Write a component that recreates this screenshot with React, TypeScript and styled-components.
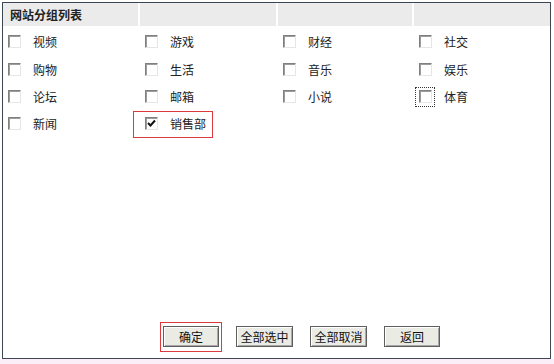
import React from "react";
import styled, { createGlobalStyle } from "styled-components";

const Global = createGlobalStyle`
  html, body { margin: 0; padding: 0; background: #fff; }
  body { font-family: "Noto Sans CJK SC", "Noto Sans", sans-serif; font-size: 12px; color: #1a1a1a; }
`;

const Page = styled.div`
  width: 554px;
  height: 364px;
  box-sizing: border-box;
  padding: 2px 0 0 2px;
  background: linear-gradient(to bottom, #fff 0, #fff 359px, #fbeef8 359px);
`;

const Frame = styled.div`
  width: 549px;
  height: 357px;
  box-sizing: border-box;
  border: 1px solid #3d4653;
  display: flex;
  flex-direction: column;
  background: #fff;
`;

const COLS = "135px 136px 134px 136px";

const Header = styled.div`
  display: grid;
  grid-template-columns: ${COLS};
  column-gap: 2px;
  height: 23px;
`;

const HeaderCell = styled.div`
  background: #ebebeb;
  display: flex;
  align-items: center;
  padding-left: 7px;
  font-weight: bold;
  font-size: 12px;
  color: #222;
`;

const Body = styled.div`
  display: grid;
  grid-template-columns: ${COLS};
  column-gap: 2px;
  grid-auto-rows: 27.4px;
  padding-top: 2px;
`;

const Cell = styled.label<{ $highlight?: boolean }>`
  position: relative;
  display: flex;
  align-items: center;
  gap: 12px;
  padding-left: 5px;
  font-size: 12px;
  color: #222;
  ${(p) =>
    p.$highlight &&
    `
    &::after {
      content: "";
      position: absolute;
      left: -7px;
      top: 1px;
      width: 80px;
      height: 27px;
      box-sizing: border-box;
      border: 1px solid #dc3a3f;
    }
  `}
`;

const Box = styled.span<{ $focus?: boolean }>`
  position: relative;
  width: 13px;
  height: 13px;
  box-sizing: border-box;
  border-style: solid;
  border-width: 1px;
  border-color: #808080 #e6e6e6 #e6e6e6 #808080;
  box-shadow: inset 1px 1px 0 #9c9c9c;
  background: #fff;
  display: flex;
  align-items: center;
  justify-content: center;
  ${(p) =>
    p.$focus &&
    `
    &::before {
      content: "";
      position: absolute;
      left: -5px;
      top: -4px;
      width: 20px;
      height: 20px;
      box-sizing: border-box;
      border: 1px dotted #333;
    }
  `}
`;

const Bar = styled.div`
  margin-top: auto;
  display: flex;
  align-items: center;
  padding: 0 0 11px 160px;
  gap: 17px;
`;

const Button = styled.button<{ $w: number; $highlight?: boolean }>`
  position: relative;
  width: ${(p) => p.$w}px;
  height: 21px;
  box-sizing: border-box;
  padding: 0;
  border: 1px solid #5e5e5e;
  background: #ebebe6;
  box-shadow: inset 1px 1px 0 #fff, inset -1px -1px 0 #a8a8a8;
  font-family: "Noto Sans CJK SC", sans-serif;
  font-size: 12px;
  color: #111;
  ${(p) =>
    p.$highlight &&
    `
    &::after {
      content: "";
      position: absolute;
      left: -4px;
      top: -5px;
      width: 62px;
      height: 30px;
      box-sizing: border-box;
      border: 1px solid #dc3a3f;
    }
  `}
`;

const Check = () => (
  <svg width="9" height="9" viewBox="0 0 9 9">
    <path d="M1 4 L3.5 6.5 L8 1.5" stroke="#111" strokeWidth="2" fill="none" />
  </svg>
);

const items: { label: string; checked?: boolean; focus?: boolean; highlight?: boolean }[] = [
  { label: "视频" },
  { label: "游戏" },
  { label: "财经" },
  { label: "社交" },
  { label: "购物" },
  { label: "生活" },
  { label: "音乐" },
  { label: "娱乐" },
  { label: "论坛" },
  { label: "邮箱" },
  { label: "小说" },
  { label: "体育", focus: true },
  { label: "新闻" },
  { label: "销售部", checked: true, highlight: true },
];

export default function App() {
  return (
    <Page>
      <Global />
      <Frame>
        <Header>
          <HeaderCell>网站分组列表</HeaderCell>
          <HeaderCell />
          <HeaderCell />
          <HeaderCell />
        </Header>
        <Body>
          {items.map((it) => (
            <Cell key={it.label} $highlight={it.highlight}>
              <Box $focus={it.focus}>{it.checked && <Check />}</Box>
              <span>{it.label}</span>
            </Cell>
          ))}
        </Body>
        <Bar>
          <Button $w={56} $highlight>确定</Button>
          <Button $w={57}>全部选中</Button>
          <Button $w={57}>全部取消</Button>
          <Button $w={56}>返回</Button>
        </Bar>
      </Frame>
    </Page>
  );
}
